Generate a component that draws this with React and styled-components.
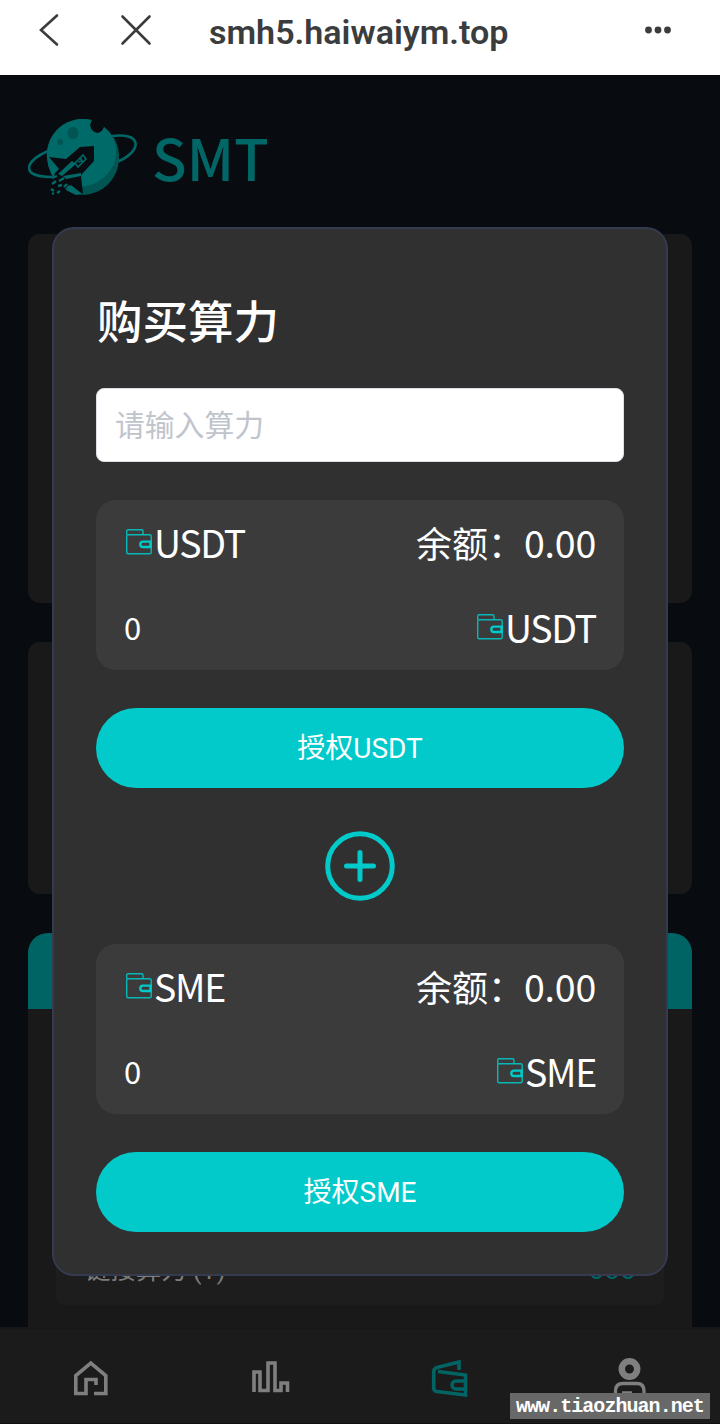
import styled, { createGlobalStyle } from 'styled-components';

const GlobalStyle = createGlobalStyle`
  * {
    box-sizing: border-box;
  }

  body {
    margin: 0;
    background: #080b10;
    font-family: Roboto, "Noto Sans CJK SC", sans-serif;
  }
`;

const Screen = styled.div`
  position: relative;
  display: flex;
  flex-direction: column;
  width: 720px;
  height: 1424px;
  overflow: hidden;
  background: #080b10;
`;

const BrowserBar = styled.header`
  display: flex;
  align-items: center;
  flex-shrink: 0;
  height: 75px;
  padding: 0 48px 15px 38px;
  background: white;
  color: #3b3c3e;
`;

const BackIcon = styled.svg`
  width: 22px;
  height: 34px;
`;

const CloseIcon = styled.svg`
  width: 32px;
  height: 32px;
  margin-left: 60px;
`;

const Address = styled.h1`
  flex: 1;
  margin: 3px 0 0 57px;
  font-size: 34.1px;
  font-weight: 600;
  line-height: 40px;
  white-space: nowrap;
`;

const MoreIcon = styled.svg`
  width: 28px;
  height: 8px;
`;

const Page = styled.main`
  display: flex;
  flex-direction: column;
  flex: 1;
  min-height: 0;
  padding: 0 28px;
`;

const Brand = styled.div`
  display: flex;
  align-items: flex-start;
  flex-shrink: 0;
  height: 159px;
  padding-top: 44px;
  color: #006666;
`;

const Logo = styled.svg`
  width: 109px;
  height: 78px;
`;

const BrandName = styled.span`
  margin: 2px 0 0 15px;
  font-family: "Noto Sans CJK SC", sans-serif;
  font-size: 57px;
  font-weight: 500;
  line-height: 70px;
`;

const Panel = styled.section`
  flex-shrink: 0;
  height: ${props => props.$height}px;
  margin-bottom: 39px;
  border-radius: 12px;
  background: #191919;
`;

const StatsPanel = styled.section`
  display: flex;
  flex-direction: column;
  flex: 1;
  border-radius: 20px 20px 0 0;
  overflow: hidden;
  background: #191919;
`;

const StatsHead = styled.div`
  height: 76px;
  background: #006464;
`;

const StatsRow = styled.div`
  display: flex;
  justify-content: space-between;
  align-items: center;
  height: 70px;
  margin: auto 28px 22px;
  padding: 0 28px 5px 29px;
  border-radius: 8px;
  background: #1d1d1d;
  color: #7d7d7d;
  font-size: 25.4px;
`;

const StatsValue = styled.span`
  padding-top: 3px;
  color: #006666;
  font-size: 28px;
`;

const TabBar = styled.nav`
  display: flex;
  flex-shrink: 0;
  height: 97px;
  border-top: 2px solid #171717;
  border-bottom: 1px solid #101010;
  background: #1b1b1b;
`;

const Tab = styled.div`
  display: flex;
  justify-content: center;
  flex: 1;
  padding-top: 28px;
  color: ${props => props.$active ? '#006464' : '#7f7f7f'};
`;

const TabIcon = styled.svg`
  width: 40px;
  height: 44px;
  fill: none;
  stroke: currentColor;
  stroke-width: 3.6;
`;

const Modal = styled.div`
  position: absolute;
  top: 227px;
  left: 52px;
  display: flex;
  flex-direction: column;
  width: 616px;
  height: 1049px;
  padding: 58px 42px 42px;
  border: 2px solid #343b50;
  border-radius: 22px;
  background: #303030;
  color: white;
`;

const ModalTitle = styled.h2`
  height: 70px;
  margin: 0;
  padding: 2px 0 0 1px;
  font-size: 45.5px;
  font-weight: 500;
  line-height: 70px;
`;

const Input = styled.input`
  height: 74px;
  margin: 31px 0 38px;
  padding: 1px 18px 0;
  border: 1px solid #dcdfe6;
  border-radius: 8px;
  outline: none;
  background: white;
  font-family: inherit;
  font-size: 29.8px;

  &::placeholder {
    color: #c0c4cc;
    opacity: 1;
  }
`;

const CoinCard = styled.div`
  display: flex;
  flex-direction: column;
  height: 170px;
  padding: 0 28px;
  border-radius: 20px;
  background: #3b3b3b;
`;

const CoinRow = styled.div`
  display: flex;
  justify-content: space-between;
  align-items: center;
  height: 86px;
  padding-bottom: 2px;
  font-family: "Noto Sans CJK SC", sans-serif;
`;

const Coin = styled.span`
  display: flex;
  align-items: center;
  font-size: 37.5px;
  line-height: 50px;
  letter-spacing: -1.3px;
`;

const WalletIcon = styled.svg`
  width: 30px;
  height: 30px;
`;

const Balance = styled.span`
  display: flex;
  align-items: center;
  font-size: 36px;
  line-height: 50px;
`;

const Digits = styled.span`
  font-size: 37.5px;
  letter-spacing: -0.2px;
`;

const Amount = styled.span`
  font-size: 31px;
`;

const Button = styled.button`
  height: 80px;
  margin-top: 38px;
  padding: 0 0 5px;
  border: none;
  border-radius: 40px;
  background: #02caca;
  color: white;
  font-family: inherit;
  font-size: 28px;

  &:hover {
    cursor: pointer;
  }
`;

const PlusIcon = styled.svg`
  width: 70px;
  height: 70px;
  margin: 43px auto;
`;

const Watermark = styled.div`
  position: absolute;
  right: 10px;
  bottom: 5px;
  width: 200px;
  height: 26px;
  padding-left: 6px;
  background: #686868;
  color: white;
  font-family: "Liberation Mono", monospace;
  font-size: 20px;
  font-weight: bold;
  line-height: 27px;
  letter-spacing: -0.95px;
  white-space: nowrap;
`;

const Wallet = () => (
  <WalletIcon viewBox="0 0 30 30" fill="none" stroke="#08b8b8" strokeWidth="1.4">
    <path d="M2.7 7.7V4.2Q2.7 2.7 4.2 2.7H17.5Q19 2.7 19 4.2V7.7" />
    <rect x="2.7" y="7.7" width="24.5" height="19" rx="1.5" />
    <path d="M26.5 14.6H19A2.7 2.7 0 0 0 19 20H26.5Z" stroke="#02caca" strokeWidth="2.4" />
  </WalletIcon>
);

const CoinBlock = ({ name }) => (
  <>
    <CoinCard>
      <CoinRow>
        <Coin><Wallet />{name}</Coin>
        <Balance>余额：<Digits>0.00</Digits></Balance>
      </CoinRow>
      <CoinRow>
        <Amount>0</Amount>
        <Coin><Wallet />{name}</Coin>
      </CoinRow>
    </CoinCard>
    <Button>授权{name}</Button>
  </>
);

const Planet = () => (
  <Logo viewBox="0 0 109 78">
    <path d="M20 32C-5 43-7 58 24 58M84 17C114 13 115 32 89 43" fill="none" stroke="#006666" strokeWidth="2.6" />
    <path d="M64 1A36 36 0 0 0 19 39Q21 54 31 65Q42 76 56 76A37 37 0 0 0 91 41Q92 20 76 8Q75 14 69 14Q63 12 62 6Z" fill="#005451" />
    <path d="M63 1A36 36 0 0 0 19 39Q20 56 34 69L54 68Q76 65 86 45Q93 23 76 8Q74 14 68 14Q62 12 62 6Z" fill="#006a68" />
    <ellipse cx="45" cy="14" rx="5.5" ry="6" fill="#005451" />
    <circle cx="32" cy="23" r="3" fill="#005451" />
    {/* rocket body, side fin and tail fin */}
    <path d="M21 38L38 40L52 28L66 27V42L54 55L53 57L55 75L41 66L30 76L22 72L27 54L31 50Z" fill="#080b10" />
    <path d="M34 57L48 45L44 42L30 55ZM35 57L53 54V57L38 60ZM38 71L43 66L54 75L48 76Z" fill="#006a68" />
    <path d="M47 44L55 36L58 40L50 48ZM52 38L54 42L50 43" fill="none" stroke="#006666" strokeWidth="1.7" />
    <path d="M24 59L29 57M31 62L36 59M24 65L28 62M30 67L34 66M36 68L39 65M23 70L26 72M29 74L32 72M24 75L26 74" fill="none" stroke="#006a68" strokeWidth="2.4" />
  </Logo>
);

const App = () => {
  return (
    <>
      <GlobalStyle />
      <Screen>
        <BrowserBar>
          <BackIcon viewBox="0 0 22 34" fill="none" stroke="currentColor" strokeWidth="2.6" strokeLinecap="round">
            <path d="M19 2.5L3 17L19 31.5" />
          </BackIcon>
          <CloseIcon viewBox="0 0 32 32" fill="none" stroke="currentColor" strokeWidth="2.6" strokeLinecap="round">
            <path d="M2.5 2.5L29.5 29.5M29.5 2.5L2.5 29.5" />
          </CloseIcon>
          <Address>smh5.haiwaiym.top</Address>
          <MoreIcon viewBox="0 0 28 8" fill="currentColor">
            <circle cx="4.5" cy="4" r="3.4" />
            <circle cx="14" cy="4" r="3.4" />
            <circle cx="23.5" cy="4" r="3.4" />
          </MoreIcon>
        </BrowserBar>

        <Page>
          <Brand>
            <Planet />
            <BrandName>SMT</BrandName>
          </Brand>
          <Panel $height={369} />
          <Panel $height={252} />
          <StatsPanel>
            <StatsHead />
            <StatsRow>
              <span>链接算力 (T)</span>
              <StatsValue>000</StatsValue>
            </StatsRow>
          </StatsPanel>
        </Page>

        <TabBar>
          <Tab>
            <TabIcon viewBox="0 0 40 44">
              <path d="M24 36.5H35.8V18.5L20.8 6L5.8 18.5V36.5H16V22.5H26V28" />
            </TabIcon>
          </Tab>
          <Tab>
            <TabIcon viewBox="0 0 40 44">
              <path d="M4 35V15H10V33.5H18V6H25V33.5H31V26H37.5V35" />
            </TabIcon>
          </Tab>
          <Tab $active>
            <TabIcon viewBox="0 0 40 44">
              <path d="M29 13V5L7 10.5Q3.7 11.5 3.7 15V31Q3.7 34 7 34.5L35.5 38V18L8 14.5M35 24H26A4 4 0 0 0 26 32H35" />
            </TabIcon>
          </Tab>
          <Tab>
            <TabIcon viewBox="0 0 40 44">
              <circle cx="19.5" cy="12" r="7.7" strokeWidth="6.5" />
              <path d="M5.5 40V34Q5.5 26.5 13 26.5H27Q34 26.5 34 34V40H5.5M12 36H22" strokeWidth="3.3" />
            </TabIcon>
          </Tab>
        </TabBar>

        <Modal>
          <ModalTitle>购买算力</ModalTitle>
          <Input placeholder="请输入算力" />
          <CoinBlock name="USDT" />
          <PlusIcon viewBox="0 0 70 70" fill="none" stroke="#02caca" strokeWidth="5" strokeLinecap="round">
            <circle cx="35" cy="35" r="32.3" />
            <path d="M21.5 35H48.5M35 21.5V48.5" />
          </PlusIcon>
          <CoinBlock name="SME" />
        </Modal>

        <Watermark>www.tiaozhuan.net</Watermark>
      </Screen>
    </>
  );
};

export default App;
